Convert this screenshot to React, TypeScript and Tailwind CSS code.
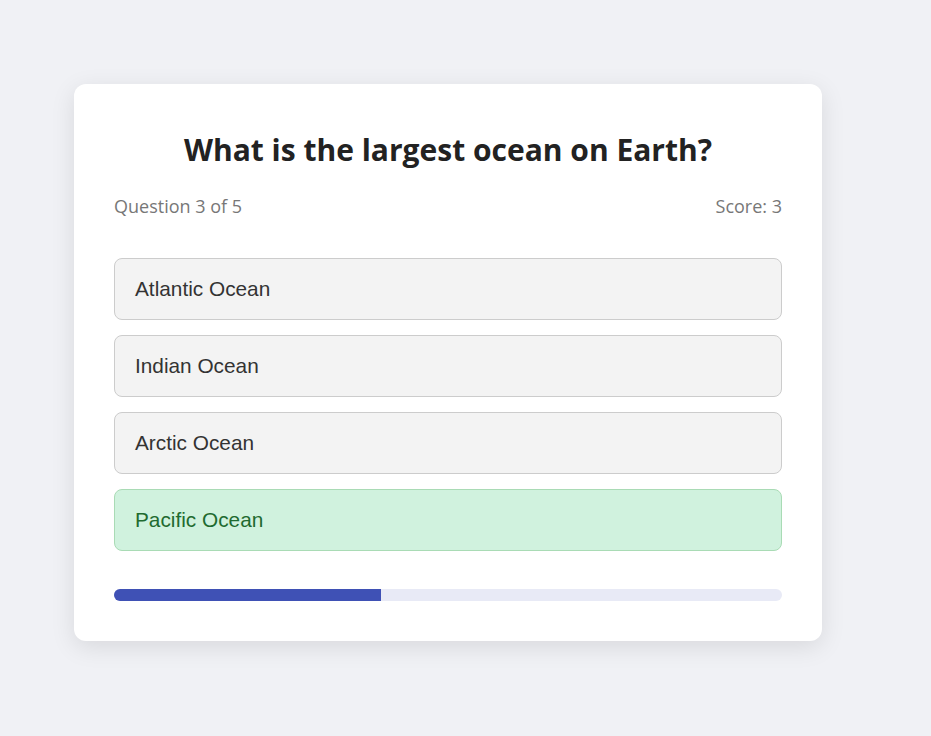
import React from 'react';

const options = [
  { label: 'Atlantic Ocean', correct: false },
  { label: 'Indian Ocean', correct: false },
  { label: 'Arctic Ocean', correct: false },
  { label: 'Pacific Ocean', correct: true },
];

export default function App() {
  const progress = 40;

  return (
    <div className="min-h-[736px] bg-[#f0f1f5] pt-[84px] pl-[74px]">
      <div className="w-[748px] rounded-xl bg-white px-10 pt-10 pb-10 shadow-[0_6px_24px_rgba(0,0,0,0.10)]">
        <h2 className="mt-[6px] text-center text-[30px] leading-[40px] font-bold text-[#222] font-['Open_Sans',sans-serif]">
          What is the largest ocean on Earth?
        </h2>

        <div className="mt-[24px] flex justify-between text-[18px] leading-6 text-[#777] font-['Open_Sans',sans-serif]">
          <span>Question 3 of 5</span>
          <span>Score: 3</span>
        </div>

        <div className="mt-[40px] flex flex-col gap-[15px]">
          {options.map((o) => (
            <div
              key={o.label}
              className={
                o.correct
                  ? "flex h-[62px] items-center rounded-lg border border-[#a9dbb5] bg-[#d0f2de] px-5 text-[20.8px] text-[#1f6b30] font-['Liberation_Sans',Arial,sans-serif]"
                  : "flex h-[62px] items-center rounded-lg border border-[#cccccc] bg-[#f3f3f3] px-5 text-[20.8px] text-[#333] font-['Liberation_Sans',Arial,sans-serif]"
              }
            >
              {o.label}
            </div>
          ))}
        </div>

        <div className="mt-[38px] h-3 w-full overflow-hidden rounded-full bg-[#e8eaf6]">
          <div className="h-full bg-[#3f51b5]" style={{ width: `${progress}%` }} />
        </div>
      </div>
    </div>
  );
}
